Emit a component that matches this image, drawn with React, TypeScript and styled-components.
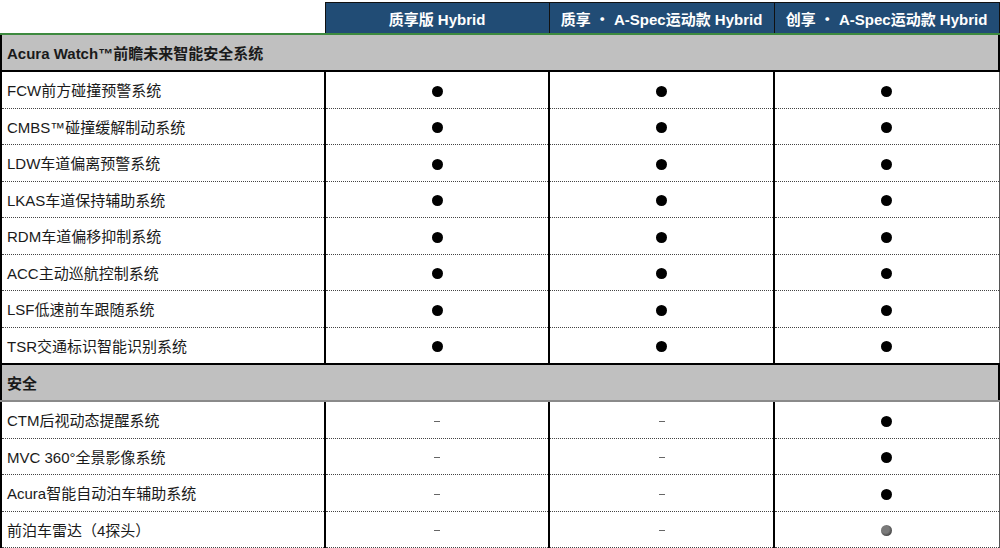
import React from "react";
import styled, { createGlobalStyle } from "styled-components";

const GlobalStyle = createGlobalStyle`
  html, body {
    margin: 0;
    padding: 0;
    background: #fff;
  }
  body {
    font-family: "Liberation Sans", "Noto Sans CJK SC", sans-serif;
    color: #1a1a1a;
  }
`;

const Page = styled.div`
  width: 1000px;
  height: 548px;
  overflow: hidden;
  padding-top: 2px;
  box-sizing: border-box;
`;

const Table = styled.table`
  width: 998px;
  border-collapse: collapse;
  table-layout: fixed;
  font-size: 15px;
`;

const HeadCell = styled.th<{ $blank?: boolean }>`
  height: 30px;
  padding: 0 4px;
  background: ${({ $blank }) => ($blank ? "transparent" : "#214c75")};
  color: #fff;
  font-weight: 600;
  font-size: 15px;
  text-align: center;
  white-space: nowrap;
  border: ${({ $blank }) => ($blank ? "none" : "1px solid #111")};
  border-bottom: 2px solid #3d8a3f;
`;

const SectionCell = styled.td<{ $bottom: string }>`
  height: 35px;
  padding: 0 5px;
  background: #c0c0c0;
  font-weight: 600;
  border-left: 2px solid #000;
  border-right: 2px solid #000;
  border-top: 2px solid #000;
  border-bottom: 2px solid ${({ $bottom }) => $bottom};
`;

const NameCell = styled.td`
  height: 35.5px;
  padding: 0 5px;
  white-space: nowrap;
  border-left: 2px solid #000;
  border-right: 2px solid #000;
  border-bottom: 1px dotted #444;
`;

const MarkCell = styled.td`
  height: 35.5px;
  padding: 0;
  text-align: center;
  border-left: 2px solid #000;
  border-right: 2px solid #000;
  border-bottom: 1px dotted #444;
  &:last-child {
    border-right: 1px solid #555;
  }
`;

const Dot = styled.span<{ $faded?: boolean }>`
  display: inline-block;
  width: 11px;
  height: 11px;
  border-radius: 50%;
  vertical-align: middle;
  background: ${({ $faded }) =>
    $faded
      ? "radial-gradient(circle at 40% 40%, #7a7a7a 0 40%, #4a4a4a 70%, #111 100%)"
      : "#000"};
`;

const Dash = styled.span`
  display: inline-block;
  width: 6px;
  height: 1px;
  background: #666;
  vertical-align: middle;
`;

type Mark = "dot" | "dash" | "faded";

type Row = { name: string; marks: Mark[] };

type Section = { title: string; bottom: string; rows: Row[] };

const all: Mark[] = ["dot", "dot", "dot"];

const sections: Section[] = [
  {
    title: "Acura Watch™前瞻未来智能安全系统",
    bottom: "#000",
    rows: [
      { name: "FCW前方碰撞预警系统", marks: all },
      { name: "CMBS™碰撞缓解制动系统", marks: all },
      { name: "LDW车道偏离预警系统", marks: all },
      { name: "LKAS车道保持辅助系统", marks: all },
      { name: "RDM车道偏移抑制系统", marks: all },
      { name: "ACC主动巡航控制系统", marks: all },
      { name: "LSF低速前车跟随系统", marks: all },
      { name: "TSR交通标识智能识别系统", marks: all },
    ],
  },
  {
    title: "安全",
    bottom: "#8a8a8a",
    rows: [
      { name: "CTM后视动态提醒系统", marks: ["dash", "dash", "dot"] },
      { name: "MVC 360°全景影像系统", marks: ["dash", "dash", "dot"] },
      { name: "Acura智能自动泊车辅助系统", marks: ["dash", "dash", "dot"] },
      { name: "前泊车雷达（4探头）", marks: ["dash", "dash", "faded"] },
    ],
  },
];

const trims = ["质享版 Hybrid", "质享 ・ A-Spec运动款 Hybrid", "创享 ・ A-Spec运动款 Hybrid"];

function MarkIcon({ mark }: { mark: Mark }) {
  if (mark === "dash") return <Dash />;
  return <Dot $faded={mark === "faded"} />;
}

export default function App() {
  return (
    <Page>
      <GlobalStyle />
      <Table>
        <colgroup>
          <col style={{ width: 324 }} />
          <col style={{ width: 224 }} />
          <col style={{ width: 225 }} />
          <col style={{ width: 225 }} />
        </colgroup>
        <thead>
          <tr>
            <HeadCell $blank />
            {trims.map((t) => (
              <HeadCell key={t}>{t}</HeadCell>
            ))}
          </tr>
        </thead>
        <tbody>
          {sections.map((s) => (
            <React.Fragment key={s.title}>
              <tr>
                <SectionCell colSpan={4} $bottom={s.bottom}>
                  {s.title}
                </SectionCell>
              </tr>
              {s.rows.map((r) => (
                <tr key={r.name}>
                  <NameCell>{r.name}</NameCell>
                  {r.marks.map((m, i) => (
                    <MarkCell key={i}>
                      <MarkIcon mark={m} />
                    </MarkCell>
                  ))}
                </tr>
              ))}
            </React.Fragment>
          ))}
        </tbody>
      </Table>
    </Page>
  );
}
